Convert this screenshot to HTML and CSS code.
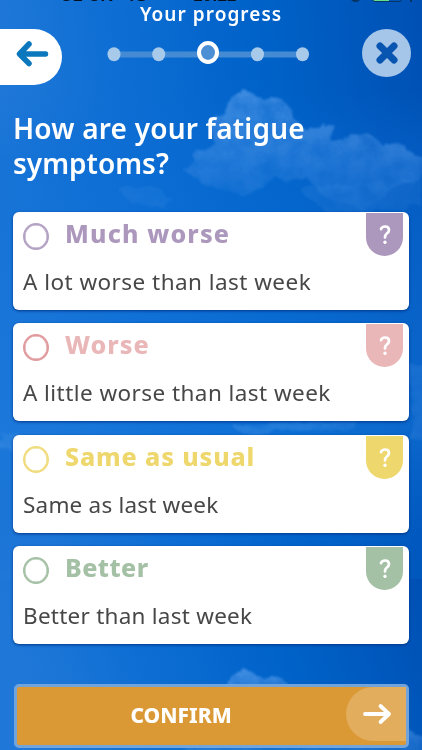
FILE: index.html
```html
<!DOCTYPE html>
<html lang="en">
<head>
<meta charset="utf-8">
<title>Your progress</title>
<link rel="stylesheet" href="styles.css">
</head>
<body>
<svg class="sky" viewBox="0 0 422 750" aria-hidden="true">
  <defs>
    <linearGradient id="blue" x1="0" y1="0.15" x2="1" y2="0">
      <stop offset="0" stop-color="#1f78d8"/><stop offset=".3" stop-color="#0d6dd3"/><stop offset=".6" stop-color="#0063c9"/><stop offset="1" stop-color="#0050b4"/>
    </linearGradient>
    <linearGradient id="low" x1="0" y1="0" x2="0" y2="1">
      <stop offset="0" stop-color="#0a6cd4" stop-opacity="0"/><stop offset=".15" stop-color="#0a6cd4" stop-opacity=".4"/><stop offset=".7" stop-color="#1878dc" stop-opacity=".5"/><stop offset="1" stop-color="#0060cc" stop-opacity="0"/>
    </linearGradient>
    <linearGradient id="fade" x1="0" y1="88" x2="0" y2="212" gradientUnits="userSpaceOnUse">
      <stop offset="0" stop-color="#5da0ec" stop-opacity=".65"/><stop offset=".5" stop-color="#4a92e4" stop-opacity=".55"/><stop offset="1" stop-color="#4a92e4" stop-opacity=".08"/>
    </linearGradient>
    <filter id="puff" x="-20%" y="-20%" width="140%" height="140%">
      <feTurbulence type="fractalNoise" baseFrequency=".05" numOctaves="4" seed="8" result="n"/>
      <feDisplacementMap in="SourceGraphic" in2="n" scale="14" xChannelSelector="R" yChannelSelector="G" result="d"/>
      <feGaussianBlur in="d" stdDeviation="1.2" result="b"/>
      <feColorMatrix in="n" type="matrix" values="0 0 0 0 1  0 0 0 0 1  0 0 0 0 1  1 0 0 0 .35" result="m"/>
      <feComposite in="b" in2="m" operator="in"/>
    </filter>
    <g id="clouds" fill="#5da0ec" filter="url(#puff)">
      <path fill="url(#fade)" d="M187 172 L194 154 214 142 208 124 226 112 232 96 248 89 258 98 275 95 290 108 302 128 320 128 326 122 336 128 330 142 346 138 362 134 384 144 404 142 422 158 426 176 392 190 370 208 330 200 308 180 276 178 246 196 214 190Z"/>
      <path opacity=".14" d="M120 190 L150 184 172 196 165 208 130 204Z"/>
      <path opacity=".14" d="M300 188 L420 178 422 206 330 215Z"/>
      <path opacity=".28" d="M0 430 L20 436 20 450 0 450Z M230 426 L360 418 350 430 240 434Z"/>
      <path opacity=".18" d="M408 360 L430 370 430 442 412 438Z"/>
    </g>
  </defs>
  <rect width="422" height="579" fill="url(#blue)"/>
  <rect y="579" width="422" height="171" fill="url(#blue)"/>
  <rect y="90" width="422" height="489" fill="url(#low)"/>
  <use href="#clouds"/>
  <use href="#clouds" y="579"/>
</svg>
<div class="screen">
  <div class="status"><span class="carrier">O2-UK</span><span class="net">4G</span><span class="time">10:22</span><span class="lock"></span><span class="battery"></span><span class="plug"></span></div>
  <header class="header">
    <button class="back" aria-label="Back"><svg width="34" height="28" viewBox="0 0 34 28"><path d="M14 4 4.500 14l9.500 9.500M5 14h25.500" fill="none" stroke="#0b77bd" stroke-width="5.500" stroke-linecap="round" stroke-linejoin="round"/></svg></button>
    <div class="progress">
      <div class="progress-label">Your progress</div>
      <svg class="steps" width="206" height="28" viewBox="0 0 206 28">
        <path d="M9 16.500h188" stroke="#458bd3" stroke-width="6"/>
        <g fill="#a7c9ea"><ellipse cx="9" cy="16.300" rx="6.500" ry="7"/><ellipse cx="53.700" cy="16.300" rx="6.500" ry="7"/><ellipse cx="152.500" cy="16.300" rx="6.500" ry="7"/><ellipse cx="197.500" cy="16.300" rx="6.500" ry="7"/></g>
        <ellipse cx="103" cy="14.500" rx="9" ry="9.500" fill="#4d8fd5" stroke="#fff" stroke-width="4"/>
      </svg>
    </div>
    <button class="close" aria-label="Close"><svg width="22" height="22" viewBox="0 0 22 22"><path d="M4 4l14 14M18 4 4 18" stroke="#0755b0" stroke-width="7" stroke-linecap="round"/></svg></button>
  </header>
  <h1 class="question"><span class="q1">How are your fatigue</span><br><span class="q2">symptoms?</span></h1>
  <main class="options">
    <label class="card purple"><span class="ring"></span><span class="title t1">Much worse</span><span class="help"><svg width="14" height="22" viewBox="0 0 14 22"><path d="M3 5.200Q3.800 2.500 7 2.500q4 0 4 3.500 0 2-2.200 3.500Q7 10.900 7 13.500"/><circle cx="7" cy="18.300" r="1.300"/></svg></span><span class="desc d1">A lot worse than last week</span></label>
    <label class="card pink"><span class="ring"></span><span class="title t2">Worse</span><span class="help"><svg width="14" height="22" viewBox="0 0 14 22"><path d="M3 5.200Q3.800 2.500 7 2.500q4 0 4 3.500 0 2-2.200 3.500Q7 10.900 7 13.500"/><circle cx="7" cy="18.300" r="1.300"/></svg></span><span class="desc d2">A little worse than last week</span></label>
    <label class="card yellow"><span class="ring"></span><span class="title t3">Same as usual</span><span class="help"><svg width="14" height="22" viewBox="0 0 14 22"><path d="M3 5.200Q3.800 2.500 7 2.500q4 0 4 3.500 0 2-2.200 3.500Q7 10.900 7 13.500"/><circle cx="7" cy="18.300" r="1.300"/></svg></span><span class="desc d3">Same as last week</span></label>
    <label class="card green"><span class="ring"></span><span class="title t4">Better</span><span class="help"><svg width="14" height="22" viewBox="0 0 14 22"><path d="M3 5.200Q3.800 2.500 7 2.500q4 0 4 3.500 0 2-2.200 3.500Q7 10.900 7 13.500"/><circle cx="7" cy="18.300" r="1.300"/></svg></span><span class="desc d4">Better than last week</span></label>
  </main>
  <button class="confirm"><span class="confirm-text">CONFIRM</span><span class="go"><svg width="30" height="24" viewBox="0 0 30 24"><path d="M3 12h24M18.500 4l8.500 8-8.500 8" fill="none" stroke="#fff" stroke-width="3.800" stroke-linecap="round" stroke-linejoin="round"/></svg></span></button>
</div>
</body>
</html>
```
FILE: styles.css
```css
* { box-sizing: border-box; }
body { margin: 0; width: 422px; height: 750px; overflow: hidden; background: #0b68cd; font-family: "Noto Sans", "Open Sans", sans-serif; }
button { border: 0; padding: 0; font: inherit; }
svg { display: block; flex: none; }
.sky { position: absolute; left: 0; top: 0; width: 422px; height: 750px; }
.screen { position: relative; width: 422px; height: 750px; overflow: hidden; }
.status { height: 2px; overflow: hidden; display: flex; align-items: flex-end; padding-left: 60px; color: #03101f; font: 700 17px/13px "Liberation Sans", sans-serif; }
.status span { flex: none; white-space: nowrap; }
.carrier { width: 65px; }
.net { width: 68px; }
.time { width: 157px; }
.lock { width: 11px; height: 11px; border: 2px solid #083663; border-radius: 50%; }
.battery { width: 30px; height: 12px; margin-left: 11px; border: 1px solid #083663; border-radius: 3px; background: linear-gradient(90deg, #62df91 16px, transparent 16px); }
.plug { width: 2px; height: 2px; margin-left: 8px; background: #083663; }
.header { height: 98px; display: flex; align-items: flex-start; }
.back { width: 62px; height: 56px; margin-top: 27px; padding-left: 15px; background: #fff; border-radius: 0 28px 28px 0; display: flex; align-items: center; padding-bottom: 7px; }
.progress { width: 206px; margin-left: 43px; display: flex; flex-direction: column; }
.progress-label { height: 34px; padding-left: 35px; white-space: nowrap; color: #fff; font-size: 19px; line-height: 25px; font-weight: 600; letter-spacing: 1.050px; }
.steps { margin-top: 2px; }
.close { width: 49px; height: 48px; margin: 27px 0 0 51px; border-radius: 50%; background: #a5c6e8; display: flex; align-items: center; justify-content: center; }
.question { margin: 11px 0 0 13px; height: 100px; color: #fff; font-size: 28px; line-height: 35px; font-weight: 600; white-space: nowrap; }
.q1 { letter-spacing: .200px; }
.options { display: grid; grid-template-rows: repeat(4, 98px); row-gap: 13.400px; margin: 1px 13px 0; }
.card { display: grid; grid-template-columns: 52px 1fr 43px; grid-template-rows: 46px 52px; background: #fff; border-radius: 6px; box-shadow: 0 1px 3px #00378a; padding-right: 6px; }
.ring { width: 26px; height: 27px; margin: 11px 0 0 10px; border: 2.500px solid var(--ring); border-radius: 50%; box-shadow: inset 0 0 0 .500px var(--ring); }
.title { color: var(--tone); font-size: 25px; line-height: 43px; font-weight: 800; white-space: nowrap; }
.t1 { letter-spacing: 1.150px; }
.t2 { letter-spacing: 1px; }
.t3 { letter-spacing: .880px; }
.t4 { letter-spacing: .450px; }
.help { width: 37px; height: 43px; margin: 1px 0 0 0; background: var(--tone); border-radius: 0 0 19px 19px; display: flex; justify-content: center; padding-top: 11px; justify-self: end; }
.help path { fill: none; stroke: #fff; stroke-width: 2.700; stroke-linecap: round; stroke-linejoin: round; }
.help circle { fill: #fff; stroke: #fff; }
.desc { grid-column: 1 / -1; padding-left: 10px; color: #474747; font-size: 22.500px; line-height: 48px; white-space: nowrap; }
.d1 { letter-spacing: .460px; }
.d2 { letter-spacing: .440px; }
.d3 { letter-spacing: .200px; }
.d4 { letter-spacing: .250px; }
.purple { --tone: #ad98bd; --ring: #b3a1c3; }
.pink { --tone: #eab7b9; --ring: #e09a9d; }
.yellow { --tone: #eed76c; --ring: #f0dc7d; }
.green { --tone: #a4c0a5; --ring: #a4c0a5; }
.confirm { width: 395px; height: 64px; margin: 40px 0 0 13.500px; border: 3px solid #72a4dc; border-radius: 5px; background: #db9935; color: #fff; display: flex; align-items: flex-start; }
.confirm-text { width: 329px; padding-left: 114px; text-align: left; white-space: nowrap; font-size: 21px; line-height: 57px; font-weight: 800; }
.go { flex: 1; height: 54px; background: #e3ad5e; border-radius: 27px 0 0 27px; display: flex; align-items: center; padding-left: 16px; }
```
